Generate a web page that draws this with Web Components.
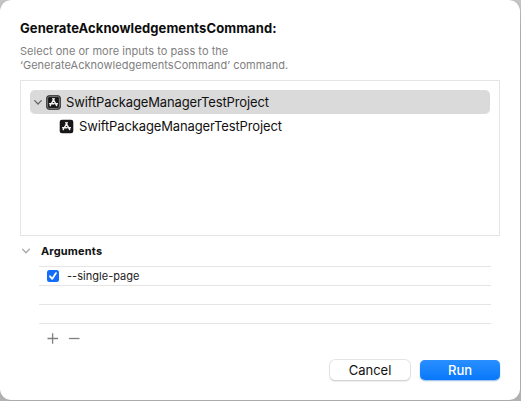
<!DOCTYPE html>
<html lang="en"><head><meta charset="utf-8"><title>GenerateAcknowledgementsCommand</title>
<style>
html,body{margin:0;height:100%;overflow:hidden;background:linear-gradient(#c6c6c6,#b1b1b1 30px)}
body{font-family:Inter,"Liberation Sans",sans-serif;color:#111}
</style></head><body>
<command-dialog>
  <dialog-heading>GenerateAcknowledgementsCommand:
    <span slot="detail">Select one or more inputs to pass to the<br>‘GenerateAcknowledgementsCommand’ command.</span>
  </dialog-heading>
  <input-tree>
    <tree-row selected>SwiftPackageManagerTestProject</tree-row>
    <tree-row child>SwiftPackageManagerTestProject</tree-row>
  </input-tree>
  <arguments-section>
    <span slot="title">Arguments</span>
    <argument-row checked>--single-page</argument-row>
    <argument-row></argument-row>
    <argument-row></argument-row>
  </arguments-section>
  <push-button slot="actions">Cancel</push-button>
  <push-button slot="actions" primary>Run</push-button>
</command-dialog>
<script>
const define=(name,html)=>customElements.define(name,class extends HTMLElement{
  constructor(){super();this.attachShadow({mode:'open'}).innerHTML=html;}
});
define('command-dialog',`<style>
:host{display:flex;flex-direction:column;box-sizing:border-box;width:520px;height:400px;background:#fff;border-radius:11px;padding:20px 20px 20px;box-shadow:0 0 1px #888}
footer{display:flex;gap:10px;justify-content:flex-end;margin-top:auto}
</style><slot></slot><footer><slot name="actions"></slot></footer>`);
define('dialog-heading',`<style>
:host{display:block;height:60px;white-space:nowrap}
h1{font-size:13px;line-height:17px;font-weight:700;letter-spacing:.08px;margin:0;color:#0c0c0c}
p{font-size:11px;line-height:14px;margin:7px 0 0;color:#808080;letter-spacing:.03px}
</style><h1><slot></slot></h1><p><slot name="detail"></slot></p>`);
define('input-tree',`<style>
:host{display:block;box-sizing:border-box;height:156px;border:1px solid #e5e5e5;padding:9px}
</style><slot></slot>`);
define('tree-row',`<style>
:host{display:flex;box-sizing:border-box;align-items:center;height:24px;padding-left:4px;border-radius:5px;font-size:13px;line-height:24px;white-space:nowrap;letter-spacing:-.13px}
:host([selected]){background:#dadada}
:host([child]){padding-left:17px}
.chevron{width:8px;height:8px;margin-right:4px;visibility:hidden;flex:none}
:host([selected]) .chevron{visibility:visible}
.app{width:15px;height:15px;margin-right:5px;flex:none}
.halo{fill:none;stroke:none}
:host([selected]) .halo{stroke:#7a7a7a}
:host([selected]) .tile{stroke:#333;stroke-width:1}
</style><svg class="chevron" viewBox="0 0 8 8"><path d="M.7 2.6 4 6 7.3 2.6" fill="none" stroke="#666" stroke-width="1.3" stroke-linecap="round"/></svg>
<svg class="app" viewBox="0 0 15 15"><rect class="tile" x=".7" y=".7" width="13.6" height="13.6" rx="2.3" fill="#171717"/><rect class="halo" x="1.6" y="1.6" width="11.8" height="11.8" rx="1.7" stroke-width="1"/><g fill="none" stroke="#f4f4f4" stroke-width="1.4" stroke-linecap="round"><path d="M6.8 3.7 10.7 10.6M8.2 3.7 5.4 8.6M4.6 10 4.2 10.7M3.6 8.8H8M10.1 8.8h1.3"/></g></svg><slot></slot>`);
define('arguments-section',`<style>
:host{display:block;margin-top:7px}
header{display:flex;align-items:center;height:16px;font-size:11px;font-weight:700;letter-spacing:.16px;padding-left:2px}
header svg{width:8px;height:8px;margin-right:11px}
.rows{margin:7px 9px 0 19px;border-top:1px solid #e5e5e5}
.tools{display:flex;gap:9px;margin:8px 0 0 27px}
.tools svg{width:12px;height:12px}
</style><header><svg viewBox="0 0 8 8"><path d="M.6 2.2 4 5.8 7.4 2.2" fill="none" stroke="#aaa" stroke-width="1.3" stroke-linecap="round"/></svg><slot name="title"></slot></header>
<div class="rows"><slot></slot></div>
<div class="tools"><svg viewBox="0 0 12 12"><path d="M.5 6.5h10.5M5.6 1.3v10.4" stroke="#808080" stroke-width="1.3"/></svg><svg viewBox="0 0 12 12"><path d="M.9 6.5h10.6" stroke="#808080" stroke-width="1.3"/></svg></div>`);
define('argument-row',`<style>
:host{display:flex;box-sizing:border-box;align-items:center;height:19px;border-bottom:1px solid #e5e5e5;padding-left:8px;font-size:11px;letter-spacing:.03px;color:#222}
svg{display:none;width:12px;height:12px;margin-right:8px}
:host([checked]) svg{display:block}
</style><svg viewBox="0 0 12 12"><rect width="12" height="12" rx="2.5" fill="#126dfa"/><path d="M3 6.3 5.2 8.9 9 3.1" fill="none" stroke="#fff" stroke-width="1.8" stroke-linecap="round" stroke-linejoin="round"/></svg><slot></slot>`);
define('push-button',`<style>
:host{display:block}
button{display:block;box-sizing:border-box;width:80px;height:20px;margin:0;padding:0;border:0;border-radius:5px;background:#fff;box-shadow:0 0 0 .7px #dcdcdc,0 1px 1.5px #aaa;color:#111;font:13px/20px Inter,"Liberation Sans",sans-serif}
:host([primary]) button{background:linear-gradient(#298fff,#0878fa);box-shadow:0 0 .5px #1474df,0 1px 1.5px #8eb9e8;color:#fff;font-weight:500}
</style><button><slot></slot></button>`);
</script></body></html>
